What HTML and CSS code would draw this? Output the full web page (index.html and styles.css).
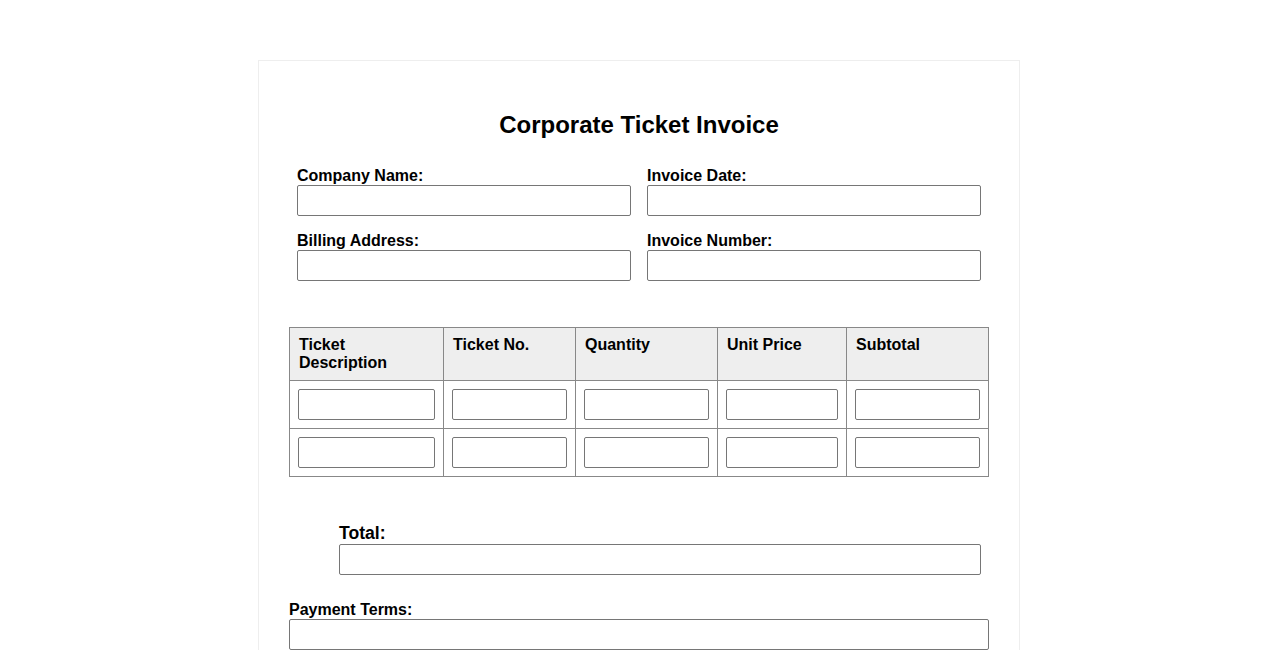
FILE: index.html
```html
<!DOCTYPE html>
<html lang="en">
<head>
<meta charset="utf-8">
<title>Corporate Ticket Invoice</title>
<link rel="stylesheet" href="styles.css">
</head>
<body>
<div class="card">
  <h1 class="title">Corporate Ticket Invoice</h1>
  <div class="info-grid">
    <div class="field">
      <label class="label">Company Name:</label>
      <input class="input" type="text">
    </div>
    <div class="field">
      <label class="label">Invoice Date:</label>
      <input class="input" type="text">
    </div>
    <div class="field">
      <label class="label">Billing Address:</label>
      <input class="input" type="text">
    </div>
    <div class="field">
      <label class="label">Invoice Number:</label>
      <input class="input" type="text">
    </div>
  </div>

  <table class="items">
    <thead>
      <tr>
        <th class="c1">Ticket Description</th>
        <th class="c2">Ticket No.</th>
        <th class="c3">Quantity</th>
        <th class="c4">Unit Price</th>
        <th class="c5">Subtotal</th>
      </tr>
    </thead>
    <tbody>
      <tr>
        <td><input class="input" type="text"></td>
        <td><input class="input" type="text"></td>
        <td><input class="input" type="text"></td>
        <td><input class="input" type="text"></td>
        <td><input class="input" type="text"></td>
      </tr>
      <tr>
        <td><input class="input" type="text"></td>
        <td><input class="input" type="text"></td>
        <td><input class="input" type="text"></td>
        <td><input class="input" type="text"></td>
        <td><input class="input" type="text"></td>
      </tr>
    </tbody>
  </table>

  <div class="total">
    <label class="total-label">Total:</label>
    <input class="input" type="text">
  </div>

  <div class="terms">
    <label class="label">Payment Terms:</label>
    <input class="input" type="text">
  </div>
</div>
</body>
</html>
```

FILE: styles.css
```css
html, body {
  margin: 0;
  padding: 0;
  background: #ffffff;
}

body {
  font-family: "Liberation Sans", Arial, sans-serif;
  color: #000;
}

.card {
  width: 700px;
  margin: 60px auto 0;
  padding: 30px;
  border: 1px solid #eeeeee;
}

.title {
  margin: 20px 0 20px;
  font-size: 24px;
  line-height: 28px;
  font-weight: bold;
  text-align: center;
}

.info-grid {
  display: grid;
  grid-template-columns: 1fr 1fr;
}

.field {
  padding: 8px;
}

.label {
  display: block;
  font-size: 16px;
  line-height: 18px;
  font-weight: bold;
}

.input {
  display: block;
  box-sizing: border-box;
  width: 100%;
  height: 31px;
  margin: 0;
  padding: 0 6px;
  border: 1px solid #767676;
  border-radius: 2px;
  background: #fff;
  font-family: inherit;
  font-size: 14px;
}

.items {
  width: 700px;
  margin-top: 38px;
  border-collapse: collapse;
  table-layout: fixed;
}

.items th,
.items td {
  border: 1px solid #888888;
  padding: 8px;
  text-align: left;
  vertical-align: top;
}

.items th {
  background: #eeeeee;
  font-size: 16px;
  line-height: 18px;
  font-weight: bold;
  padding-left: 9px;
}

.items .c1 { width: 136px; }
.items .c2 { width: 114px; }
.items .c3 { width: 124px; }
.items .c4 { width: 111px; }
.items .c5 { width: 124px; }

.total {
  margin: 46px 8px 0 50px;
}

.total-label {
  display: block;
  font-size: 17.6px;
  line-height: 21px;
  font-weight: bold;
}

.terms {
  margin-top: 26px;
}
```
